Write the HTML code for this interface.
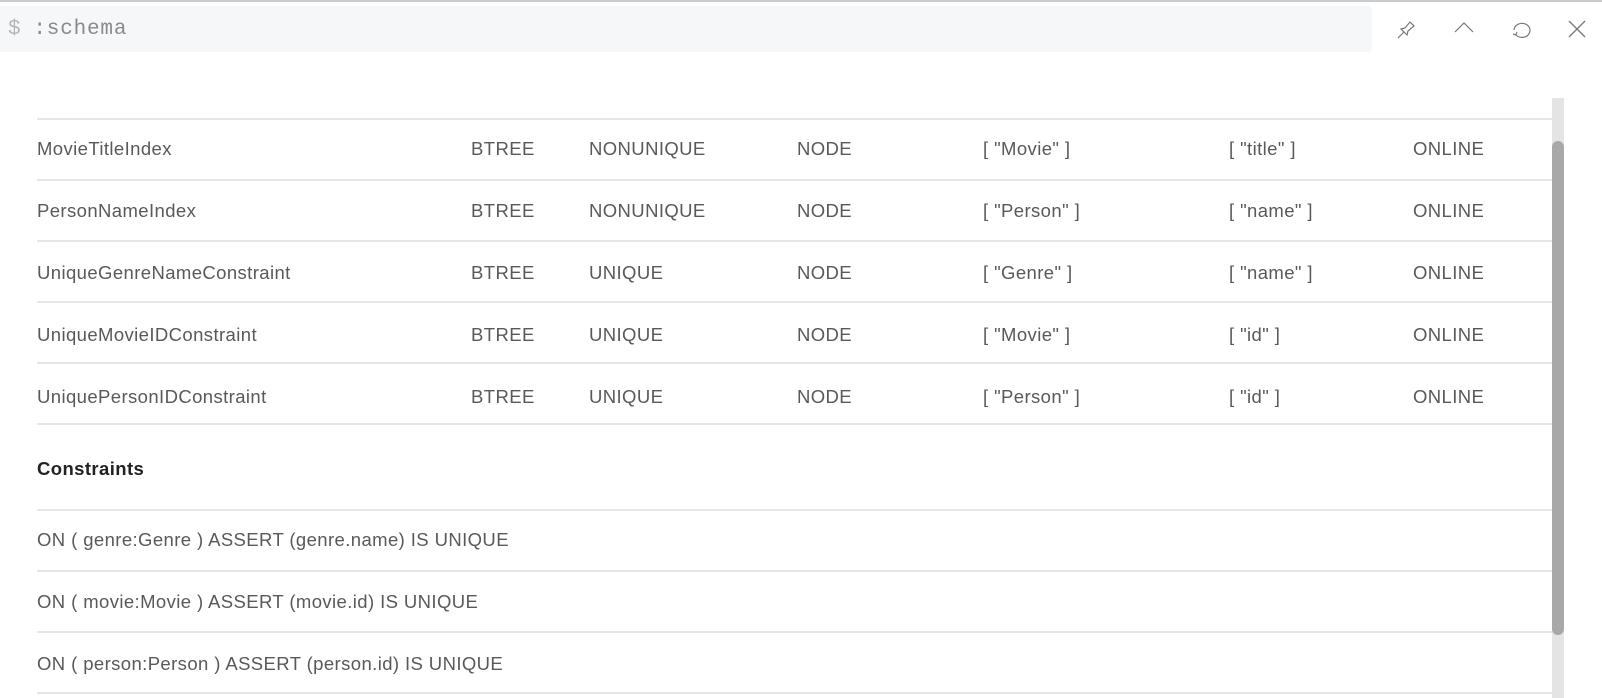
<!DOCTYPE html>
<html><head><style>
html,body{margin:0;padding:0;width:1602px;height:698px;overflow:hidden;background:#fff;font-family:"Liberation Sans",sans-serif;}
.top{position:absolute;left:0;top:0;width:1602px;height:2px;background:#c8ccd0;}
.inp{position:absolute;left:0;top:6px;width:1372px;height:46px;background:#f6f7f8;border-radius:0 4px 4px 0;}
.inp span{position:absolute;left:8px;top:12px;font-family:"Liberation Mono",monospace;font-size:21px;color:#8a8a8a;letter-spacing:0.8px}
.inp span b{font-weight:normal;color:#b5b5b5;margin-right:12px}
.icons svg{position:absolute;top:18px}
.line{position:absolute;left:37px;width:1515px;height:2px;background:#e5e6ea;}
.t{position:absolute;font-size:18.5px;color:#595959;white-space:nowrap;line-height:22px;letter-spacing:0.4px}
.track{position:absolute;left:1552px;top:98px;width:12px;height:600px;background:#e4e4e4}
.thumb{position:absolute;left:1552px;top:141px;width:12px;height:494px;background:#a8a8a8;border-radius:6px}
</style></head><body>
<div class="top"></div>
<div class="inp"><span><b>$</b>:schema</span></div>
<div class="icons">
<svg style="left:1396px" width="22" height="22" viewBox="0 0 22 22" fill="none" stroke="#777" stroke-width="1.2"><path d="M2 20 L8 14 M5 11 L11 17 L12 13 L18 8 L14 4 L9 10 Z"/></svg>
<svg style="left:1453px" width="22" height="22" viewBox="0 0 22 22" fill="none" stroke="#777" stroke-width="1.2"><path d="M2 14 L11 5 L20 14"/></svg>
<svg style="left:1510px" width="22" height="22" viewBox="0 0 22 22" fill="none" stroke="#777" stroke-width="1.2"><path d="M6 17 A8 7 0 1 0 4 12 M3 16 L6 17 L7 14"/></svg>
<svg style="left:1566px" width="22" height="22" viewBox="0 0 22 22" fill="none" stroke="#777" stroke-width="1.3"><path d="M3 3 L19 19 M19 3 L3 19"/></svg>
</div>
<div class="line" style="top:118px"></div>
<div class="line" style="top:179px"></div>
<div class="line" style="top:240px"></div>
<div class="line" style="top:301px"></div>
<div class="line" style="top:362px"></div>
<div class="line" style="top:423px"></div>
<div class="line" style="top:509px"></div>
<div class="line" style="top:570px"></div>
<div class="line" style="top:631px"></div>
<div class="line" style="top:692px"></div>

<div class="t" style="left:37px;top:138px">MovieTitleIndex</div>
<div class="t" style="left:471px;top:138px">BTREE</div>
<div class="t" style="left:589px;top:138px">NONUNIQUE</div>
<div class="t" style="left:797px;top:138px">NODE</div>
<div class="t" style="left:983px;top:138px">[ "Movie" ]</div>
<div class="t" style="left:1229px;top:138px">[ "title" ]</div>
<div class="t" style="left:1413px;top:138px">ONLINE</div>

<div class="t" style="left:37px;top:200px">PersonNameIndex</div>
<div class="t" style="left:471px;top:200px">BTREE</div>
<div class="t" style="left:589px;top:200px">NONUNIQUE</div>
<div class="t" style="left:797px;top:200px">NODE</div>
<div class="t" style="left:983px;top:200px">[ "Person" ]</div>
<div class="t" style="left:1229px;top:200px">[ "name" ]</div>
<div class="t" style="left:1413px;top:200px">ONLINE</div>

<div class="t" style="left:37px;top:262px">UniqueGenreNameConstraint</div>
<div class="t" style="left:471px;top:262px">BTREE</div>
<div class="t" style="left:589px;top:262px">UNIQUE</div>
<div class="t" style="left:797px;top:262px">NODE</div>
<div class="t" style="left:983px;top:262px">[ "Genre" ]</div>
<div class="t" style="left:1229px;top:262px">[ "name" ]</div>
<div class="t" style="left:1413px;top:262px">ONLINE</div>

<div class="t" style="left:37px;top:324px">UniqueMovieIDConstraint</div>
<div class="t" style="left:471px;top:324px">BTREE</div>
<div class="t" style="left:589px;top:324px">UNIQUE</div>
<div class="t" style="left:797px;top:324px">NODE</div>
<div class="t" style="left:983px;top:324px">[ "Movie" ]</div>
<div class="t" style="left:1229px;top:324px">[ "id" ]</div>
<div class="t" style="left:1413px;top:324px">ONLINE</div>

<div class="t" style="left:37px;top:386px">UniquePersonIDConstraint</div>
<div class="t" style="left:471px;top:386px">BTREE</div>
<div class="t" style="left:589px;top:386px">UNIQUE</div>
<div class="t" style="left:797px;top:386px">NODE</div>
<div class="t" style="left:983px;top:386px">[ "Person" ]</div>
<div class="t" style="left:1229px;top:386px">[ "id" ]</div>
<div class="t" style="left:1413px;top:386px">ONLINE</div>

<div class="t" style="left:37px;top:458px;font-weight:bold;color:#222">Constraints</div>
<div class="t" style="left:37px;top:529px">ON ( genre:Genre ) ASSERT (genre.name) IS UNIQUE</div>
<div class="t" style="left:37px;top:591px">ON ( movie:Movie ) ASSERT (movie.id) IS UNIQUE</div>
<div class="t" style="left:37px;top:653px">ON ( person:Person ) ASSERT (person.id) IS UNIQUE</div>

<div class="track"></div>
<div class="thumb"></div>
</body></html>
